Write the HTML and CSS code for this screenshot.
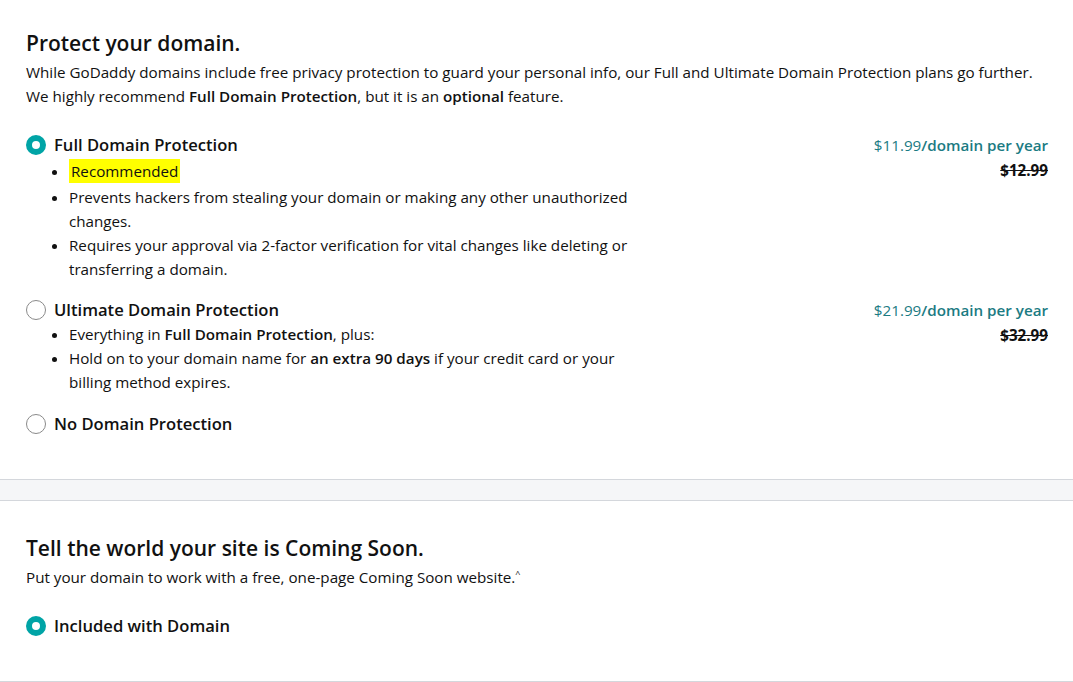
FILE: index.html
```html
<!DOCTYPE html>
<html lang="en">
<head>
    <meta charset="UTF-8">
    <meta name="viewport" content="width=device-width, initial-scale=1.0">
    <title>Domain Protection</title>
    <link rel="stylesheet" href="styles.css">
</head>
<body>
    <section class="panel">
        <h2>Protect your domain.</h2>
        <p class="intro">While GoDaddy domains include free privacy protection to guard your personal info, our Full and Ultimate Domain Protection plans go further.<br>
        We highly recommend <b>Full Domain Protection</b>, but it is an <b>optional</b> feature.</p>

        <div class="option">
            <div class="option-main">
                <label class="option-title"><span class="radio checked"></span>Full Domain Protection</label>
                <ul>
                    <li class="rec"><mark>Recommended</mark></li>
                    <li>Prevents hackers from stealing your domain or making any other unauthorized changes.</li>
                    <li>Requires your approval via 2-factor verification for vital changes like deleting or transferring a domain.</li>
                </ul>
            </div>
            <div class="price">
                <div class="now">$11.99<b>/domain per year</b></div>
                <div class="was">$12.99</div>
            </div>
        </div>

        <div class="option">
            <div class="option-main">
                <label class="option-title"><span class="radio"></span>Ultimate Domain Protection</label>
                <ul>
                    <li>Everything in <b>Full Domain Protection</b>, plus:</li>
                    <li>Hold on to your domain name for <b>an extra 90 days</b> if your credit card or your billing method expires.</li>
                </ul>
            </div>
            <div class="price">
                <div class="now">$21.99<b>/domain per year</b></div>
                <div class="was">$32.99</div>
            </div>
        </div>

        <div class="option last">
            <label class="option-title"><span class="radio"></span>No Domain Protection</label>
        </div>
    </section>

    <div class="divider"></div>

    <section class="panel second">
        <h2>Tell the world your site is Coming Soon.</h2>
        <p class="intro">Put your domain to work with a free, one-page Coming Soon website.<sup>^</sup></p>
        <label class="option-title"><span class="radio checked"></span>Included with Domain</label>
    </section>
</body>
</html>
```
FILE: styles.css
```css
/* Layout general */
body {
    font-family: "Open Sans", Arial, sans-serif;
    color: #111;
    background-color: #fff;
    margin: 0;
}

.panel {
    padding: 30px 25px 43px 26px;
}

h2 {
    font-size: 21px;
    font-weight: 600;
    margin: 0 0 4px 0;
    line-height: 26px;
}

.intro {
    font-size: 15.2px;
    line-height: 24px;
    margin: 0 0 25px 0;
}

.intro b, li b {
    font-weight: 600;
}

.option {
    display: flex;
    justify-content: space-between;
    margin-bottom: 17px;
}

.option.last {
    padding-top: 1px;
    margin-bottom: 0;
}

.option-title {
    display: flex;
    align-items: center;
    font-size: 16.6px;
    font-weight: 600;
    line-height: 24px;
}

.radio {
    width: 18px;
    height: 18px;
    border: 1px solid #8a8a8a;
    border-radius: 50%;
    margin-right: 8px;
    box-sizing: content-box;
}

.radio.checked {
    width: 8px;
    height: 8px;
    border: 6px solid #00a4a6;
}

ul {
    margin: 0;
    padding-left: 43px;
    width: 560px;
    font-size: 15.2px;
    line-height: 24px;
}

li.rec {
    margin: 2px 0 2px 0;
}

mark {
    background-color: #ffff00;
    color: #111;
    padding: 2px 2px;
}

.price {
    text-align: right;
    font-size: 15.2px;
    line-height: 24px;
}

.now {
    color: #1b7b83;
}

.now b {
    font-weight: 600;
}

.was {
    font-weight: 700;
    text-decoration: line-through;
    margin-top: 1px;
}

.divider {
    height: 20px;
    background-color: #f5f6f8;
    border-top: 1px solid #d4d7dc;
    border-bottom: 1px solid #d4d7dc;
}

.panel.second {
    padding-top: 34px;
    padding-bottom: 43px;
    border-bottom: 1px solid #d4d7dc;
}

.panel.second .intro {
    margin-bottom: 25px;
}

sup {
    font-size: 9px;
    line-height: 0;
}
```
